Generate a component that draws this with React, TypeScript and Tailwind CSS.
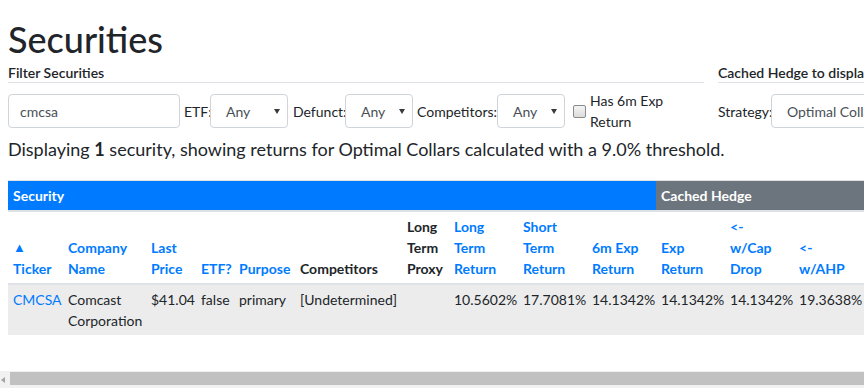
import React from "react";

function Select({ className, value }: { className: string; value: string }) {
  return (
    <div
      className={`${className} shrink-0 h-[34px] border border-[#ced4da] rounded-[4px] bg-white flex items-center justify-between pl-[15px] pr-[7px] text-[#495057]`}
    >
      <span>{value}</span>
      <svg width="6" height="5" viewBox="0 0 6 5">
        <path d="M0 0 L6 0 L3 5 Z" fill="#3a3a3a" />
      </svg>
    </div>
  );
}

const thBlue = "text-[#007bff]";

export default function App() {
  return (
    <div className="w-[864px] h-[388px] overflow-hidden flex flex-col bg-white text-[#212529] font-['Lato','Open_Sans',sans-serif] text-[14px] leading-[21px]">
      <div className="flex-1 min-h-0 overflow-hidden px-2">
        <div className="w-max">
          <h1 className="text-[36px] font-medium leading-[43px] mt-[18px] mb-[3px]">Securities</h1>

          <div className="flex items-start gap-[14px]">
            <div className="w-[696px]">
              <div className="text-[14px] font-semibold leading-[18px] border-b border-[#dee2e6]">
                Filter Securities
              </div>
              <div className="mt-[7px] h-[42px] flex items-center">
                <div className="w-[172px] shrink-0 h-[34px] border border-[#ced4da] rounded-[4px] flex items-center pl-[11px] text-[#495057]">
                  cmcsa
                </div>
                <span className="ml-[4px] w-[26px] shrink-0 whitespace-nowrap">ETF:</span>
                <Select className="w-[78px]" value="Any" />
                <span className="ml-[5px] w-[52px] shrink-0 whitespace-nowrap">Defunct:</span>
                <Select className="w-[68px]" value="Any" />
                <span className="ml-[4px] w-[80px] shrink-0 whitespace-nowrap">Competitors:</span>
                <Select className="w-[68px]" value="Any" />
                <div className="ml-[8px] shrink-0 w-[13px] h-[13px] border border-[#8a8a8a] rounded-[2px] bg-gradient-to-b from-[#f4f4f4] to-[#dcdcdc]" />
                <div className="ml-[4px] leading-[21px] whitespace-nowrap">
                  Has 6m Exp
                  <br />
                  Return
                </div>
              </div>
            </div>
            <div className="w-[320px]">
              <div className="text-[14px] font-semibold leading-[18px] border-b border-[#dee2e6] whitespace-nowrap">
                Cached Hedge to display
              </div>
              <div className="mt-[7px] h-[42px] flex items-center">
                <span className="w-[53px] shrink-0 whitespace-nowrap">Strategy:</span>
                <div className="w-[240px] shrink-0 h-[34px] border border-[#ced4da] rounded-[4px] flex items-center pl-[15px] text-[#495057] whitespace-nowrap">
                  Optimal Collars
                </div>
              </div>
            </div>
          </div>

          <div className="mt-[7px] text-[18px] leading-[21px]">
            Displaying <span className="font-bold">1</span> security, showing returns for Optimal Collars calculated with a 9.0% threshold.
          </div>

          <table className="mt-[20px] border-collapse table-fixed w-[866px] text-[14px] leading-[21px]">
            <colgroup>
              <col className="w-[55px]" />
              <col className="w-[83px]" />
              <col className="w-[50px]" />
              <col className="w-[38px]" />
              <col className="w-[61px]" />
              <col className="w-[107px]" />
              <col className="w-[47px]" />
              <col className="w-[69px]" />
              <col className="w-[69px]" />
              <col className="w-[69px]" />
              <col className="w-[69px]" />
              <col className="w-[69px]" />
              <col className="w-[80px]" />
            </colgroup>
            <thead>
              <tr>
                <th colSpan={10} className="bg-[#007bff] text-white text-left font-bold px-[5px] py-[4px] border-t border-b-2 border-[#dee2e6]">
                  Security
                </th>
                <th colSpan={3} className="bg-[#6c757d] text-white text-left font-bold px-[5px] py-[4px] border-t border-b-2 border-[#dee2e6] whitespace-nowrap">
                  Cached Hedge
                </th>
              </tr>
              <tr className="align-bottom text-left font-bold whitespace-nowrap">
                <th className={`px-[5px] py-[4px] border-b-2 border-[#dee2e6] ${thBlue}`}>
                  <span className="text-[13px]">▲</span>
                  <br />
                  Ticker
                </th>
                <th className={`px-[5px] py-[4px] border-b-2 border-[#dee2e6] ${thBlue}`}>
                  Company
                  <br />
                  Name
                </th>
                <th className={`px-[5px] py-[4px] border-b-2 border-[#dee2e6] ${thBlue}`}>
                  Last
                  <br />
                  Price
                </th>
                <th className={`px-[5px] py-[4px] border-b-2 border-[#dee2e6] ${thBlue}`}>ETF?</th>
                <th className={`px-[5px] py-[4px] border-b-2 border-[#dee2e6] ${thBlue}`}>Purpose</th>
                <th className="px-[5px] py-[4px] border-b-2 border-[#dee2e6]">Competitors</th>
                <th className="px-[5px] py-[4px] border-b-2 border-[#dee2e6]">
                  Long
                  <br />
                  Term
                  <br />
                  Proxy
                </th>
                <th className={`px-[5px] py-[4px] border-b-2 border-[#dee2e6] ${thBlue}`}>
                  Long
                  <br />
                  Term
                  <br />
                  Return
                </th>
                <th className={`px-[5px] py-[4px] border-b-2 border-[#dee2e6] ${thBlue}`}>
                  Short
                  <br />
                  Term
                  <br />
                  Return
                </th>
                <th className={`px-[5px] py-[4px] border-b-2 border-[#dee2e6] ${thBlue}`}>
                  6m Exp
                  <br />
                  Return
                </th>
                <th className={`px-[5px] py-[4px] border-b-2 border-[#dee2e6] ${thBlue}`}>
                  Exp
                  <br />
                  Return
                </th>
                <th className={`px-[5px] py-[4px] border-b-2 border-[#dee2e6] ${thBlue}`}>
                  {"<-"}
                  <br />
                  w/Cap
                  <br />
                  Drop
                </th>
                <th className={`px-[5px] py-[4px] border-b-2 border-[#dee2e6] ${thBlue}`}>
                  {"<-"}
                  <br />
                  w/AHP
                </th>
              </tr>
            </thead>
            <tbody>
              <tr className="bg-[#ececec] align-top whitespace-nowrap">
                <td className="px-[5px] py-[4px] border-t border-[#dee2e6] text-[#007bff]">CMCSA</td>
                <td className="px-[5px] py-[4px] border-t border-[#dee2e6]">
                  Comcast
                  <br />
                  Corporation
                </td>
                <td className="px-[5px] py-[4px] border-t border-[#dee2e6]">$41.04</td>
                <td className="px-[5px] py-[4px] border-t border-[#dee2e6]">false</td>
                <td className="px-[5px] py-[4px] border-t border-[#dee2e6]">primary</td>
                <td className="px-[5px] py-[4px] border-t border-[#dee2e6]">[Undetermined]</td>
                <td className="px-[5px] py-[4px] border-t border-[#dee2e6]"></td>
                <td className="px-[5px] py-[4px] border-t border-[#dee2e6]">10.5602%</td>
                <td className="px-[5px] py-[4px] border-t border-[#dee2e6]">17.7081%</td>
                <td className="px-[5px] py-[4px] border-t border-[#dee2e6]">14.1342%</td>
                <td className="px-[5px] py-[4px] border-t border-[#dee2e6]">14.1342%</td>
                <td className="px-[5px] py-[4px] border-t border-[#dee2e6]">14.1342%</td>
                <td className="px-[5px] py-[4px] border-t border-[#dee2e6]">19.3638%</td>
              </tr>
            </tbody>
          </table>
        </div>
      </div>

      <div className="h-[17px] shrink-0 bg-[#f1f1f1] flex items-start">
        <div className="w-[10px] h-[17px] flex items-center justify-start pl-[1px]">
          <svg width="4" height="6" viewBox="0 0 4 6">
            <path d="M4 0 L0 3 L4 6 Z" fill="#a3a3a3" />
          </svg>
        </div>
        <div className="flex-1 h-[13px] mt-[1px] bg-[#c1c1c1]" />
      </div>
    </div>
  );
}
